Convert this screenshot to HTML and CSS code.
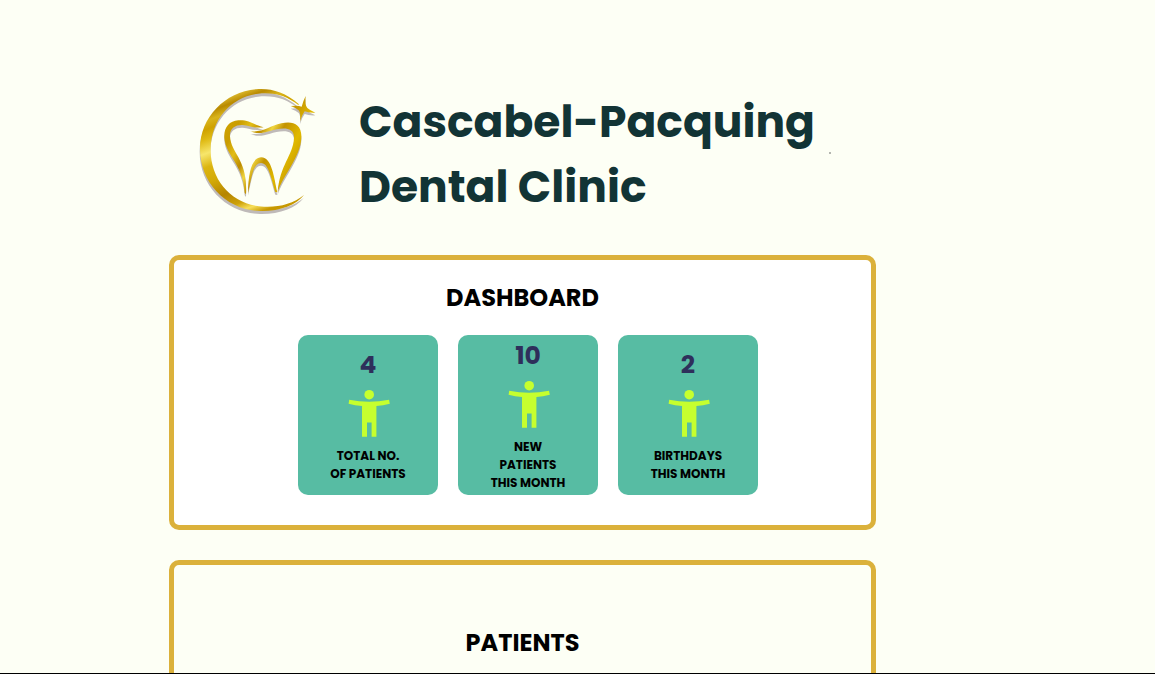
FILE: index.html
```html
<!DOCTYPE html>
<html lang="en">
<head>
<meta charset="utf-8">
<meta name="viewport" content="width=device-width, initial-scale=1">
<title>Cascabel-Pacquing Dental Clinic</title>
<link rel="stylesheet" href="styles.css">
</head>
<body>
<svg class="sprite" aria-hidden="true">
  <symbol id="person" viewBox="0 0 64 64">
    <circle cx="33.2" cy="11.7" r="4.8"/>
    <path d="M13.2 16.8Q33 20.5 53 16.8L53.8 20.8Q47 22.6 40.4 23V53.8H35.6V39.4H31V53.8H26V23Q19 22.6 12.6 20.8Z"/>
  </symbol>
</svg>
<main class="page">
  <header class="brand">
    <svg class="logo" viewBox="0 0 420 435" role="img" aria-label="Clinic logo">
      <defs>
        <linearGradient id="ring" gradientUnits="userSpaceOnUse" x1="60" y1="30" x2="200" y2="400">
          <stop offset="0" stop-color="#c99a00"/>
          <stop offset=".08" stop-color="#e6c63a"/>
          <stop offset=".15" stop-color="#b98a00"/>
          <stop offset=".21" stop-color="#d9b41c"/>
          <stop offset=".27" stop-color="#cfa200"/>
          <stop offset=".34" stop-color="#dfba14"/>
          <stop offset=".44" stop-color="#f7e66c"/>
          <stop offset=".54" stop-color="#dcb510"/>
          <stop offset=".65" stop-color="#d3aa08"/>
          <stop offset=".78" stop-color="#b58400"/>
          <stop offset=".88" stop-color="#cda10a"/>
          <stop offset=".94" stop-color="#f8e05a"/>
          <stop offset="1" stop-color="#c79800"/>
        </linearGradient>
        <linearGradient id="gold" gradientUnits="userSpaceOnUse" x1="100" y1="110" x2="340" y2="250">
          <stop offset="0" stop-color="#d2a500"/>
          <stop offset=".18" stop-color="#c99c00"/>
          <stop offset=".3" stop-color="#e2bd16"/>
          <stop offset=".42" stop-color="#bd8c00"/>
          <stop offset=".52" stop-color="#efd540"/>
          <stop offset=".62" stop-color="#c39300"/>
          <stop offset=".8" stop-color="#e0b900"/>
          <stop offset="1" stop-color="#c49600"/>
        </linearGradient>
        <path id="arc" d="M326 72C285 36 240 24 198 28C105 36 31 112 30 205C29 310 112 391 211 393C270 394 318 376 342 345C310 371 269 382 222 380C129 377 62 303 62 211C62 116 126 50 205 41C255 36 292 49 326 76Z"/>
        <g id="strokes">
          <path d="M221 142C188 133 177 119 145 121C117 123 101 143 103 174C108 229 159 251 164 338L168 343C174 237 123 222 120 169C118 145 136 134 158 135C181 137 190 145 221 142Z"/>
          <path d="M181 154C199 162 218 160 240 153C267 145 314 135 312 175C309 227 269 256 263 337C277 290 331 232 334 175C337 131 307 122 274 130C239 138 218 158 181 154Z"/>
          <path d="M174 338C175 280 184 234 213 232C246 231 252 294 262 337L256 336C243 293 235 247 212 249C188 251 185 294 174 338Z"/>
          <path d="M347 48Q344 76 352 84Q361 92 376 98Q356 99 344 94Q336 104 330 124Q333 99 326 91Q318 83 302 78Q324 75 335 80Q339 64 347 48Z"/>
        </g>
      </defs>
      <g fill="#bfbab9">
        <use href="#arc" x="-1" y="9"/>
        <use href="#strokes" y="8"/>
      </g>
      <use href="#strokes" fill="url(#gold)"/>
      <use href="#arc" fill="url(#ring)"/>
    </svg>
    <h1 class="brand-name">Cascabel-Pacquing<br>Dental Clinic</h1>
    <span class="speck" aria-hidden="true"></span>
  </header>
  <section class="panel panel-dashboard" aria-labelledby="dashboard">
    <h2 class="panel-title" id="dashboard">DASHBOARD</h2>
    <div class="cards">
      <article class="card">
        <strong class="count">4</strong>
        <svg class="person" aria-hidden="true"><use href="#person"/></svg>
        <p class="label">TOTAL NO.<br>OF PATIENTS</p>
      </article>
      <article class="card">
        <strong class="count">10</strong>
        <svg class="person" aria-hidden="true"><use href="#person"/></svg>
        <p class="label">NEW<br>PATIENTS<br>THIS MONTH</p>
      </article>
      <article class="card">
        <strong class="count">2</strong>
        <svg class="person" aria-hidden="true"><use href="#person"/></svg>
        <p class="label">BIRTHDAYS<br>THIS MONTH</p>
      </article>
    </div>
  </section>
  <section class="panel panel-patients" aria-labelledby="patients">
    <h2 class="panel-title" id="patients">PATIENTS</h2>
  </section>
</main>
</body>
</html>
```
FILE: styles.css
```css
* {
  box-sizing: border-box;
}

body {
  height: 100vh;
  margin: 0;
  overflow: hidden;
  border-bottom: 1px solid #000;
  background: #fdfff5;
  color: #000;
  font-family: Poppins, Inter, sans-serif;
  font-weight: 700;
}

.sprite {
  position: absolute;
  width: 0;
  height: 0;
}

.page {
  display: flex;
  flex-direction: column;
  gap: 30px;
  margin: 80px 279px 0 169px;
}

.brand {
  display: flex;
  align-items: center;
  height: 145px;
  padding-left: 21px;
}

.logo {
  flex: none;
  width: 140px;
  height: 145px;
  margin-right: 29px;
}

.brand-name {
  margin: 0;
  padding-top: 2px;
  color: #123435;
  font-size: 44px;
  line-height: 65px;
  white-space: nowrap;
}

.speck {
  width: 2px;
  height: 2px;
  margin-left: 14px;
  background: #b4b6b0;
}

.panel {
  border: 5px solid #dbb13b;
  border-radius: 10px;
}

.panel-dashboard {
  padding: 20px 0 30px;
  background: #fff;
}

.panel-patients {
  padding: 60px 0 30px;
}

.panel-title {
  margin: 0;
  font-size: 24px;
  line-height: 36px;
  text-align: center;
}

.cards {
  display: flex;
  justify-content: center;
  gap: 20px;
  margin-top: 19px;
  padding-left: 11px;
}

.card {
  display: flex;
  flex-direction: column;
  align-items: center;
  justify-content: center;
  width: 140px;
  min-height: 160px;
  border-radius: 10px;
  background: #57bca3;
}

.count {
  color: #2e2f5b;
  font-size: 25px;
  font-weight: 700;
  line-height: 36px;
}

.person {
  width: 64px;
  height: 64px;
  fill: #c6ff2e;
}

.label {
  margin: 0;
  font-size: 12px;
  line-height: 18px;
  text-align: center;
}
```
